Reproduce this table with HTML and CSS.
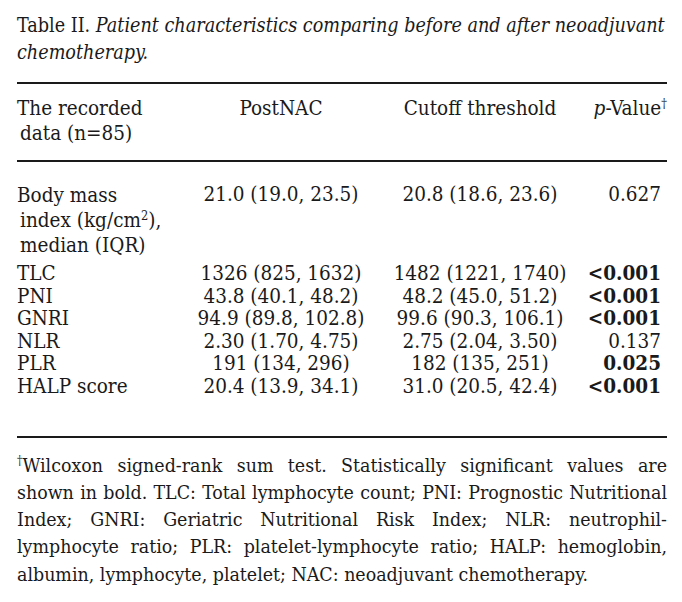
FILE: index.html
```html
<!DOCTYPE html>
<html lang="en">
<head>
<meta charset="utf-8">
<title>Table II</title>
<link rel="stylesheet" href="styles.css">
</head>
<body>
<div class="page">
  <p class="caption">Table II. <em>Patient characteristics comparing before and after neoadjuvant chemotherapy.</em></p>
  <table class="data">
    <thead>
      <tr>
        <th class="c1"><span class="hang">The recorded<br>data (n=85)</span></th>
        <th class="c2">PostNAC</th>
        <th class="c3">Cutoff threshold</th>
        <th class="c4"><em>p</em>-Value<sup>†</sup></th>
      </tr>
    </thead>
    <tbody>
      <tr class="first">
        <td class="c1"><span class="hang multi">Body mass<br>index (kg/cm<sup>2</sup>),<br>median (IQR)</span></td>
        <td class="c2">21.0 (19.0, 23.5)</td>
        <td class="c3">20.8 (18.6, 23.6)</td>
        <td class="c4">0.627</td>
      </tr>
      <tr>
        <td class="c1">TLC</td>
        <td class="c2">1326 (825, 1632)</td>
        <td class="c3">1482 (1221, 1740)</td>
        <td class="c4"><strong>&lt;0.001</strong></td>
      </tr>
      <tr>
        <td class="c1">PNI</td>
        <td class="c2">43.8 (40.1, 48.2)</td>
        <td class="c3">48.2 (45.0, 51.2)</td>
        <td class="c4"><strong>&lt;0.001</strong></td>
      </tr>
      <tr>
        <td class="c1">GNRI</td>
        <td class="c2">94.9 (89.8, 102.8)</td>
        <td class="c3">99.6 (90.3, 106.1)</td>
        <td class="c4"><strong>&lt;0.001</strong></td>
      </tr>
      <tr>
        <td class="c1">NLR</td>
        <td class="c2">2.30 (1.70, 4.75)</td>
        <td class="c3">2.75 (2.04, 3.50)</td>
        <td class="c4">0.137</td>
      </tr>
      <tr>
        <td class="c1">PLR</td>
        <td class="c2">191 (134, 296)</td>
        <td class="c3">182 (135, 251)</td>
        <td class="c4"><strong>0.025</strong></td>
      </tr>
      <tr class="last">
        <td class="c1">HALP score</td>
        <td class="c2">20.4 (13.9, 34.1)</td>
        <td class="c3">31.0 (20.5, 42.4)</td>
        <td class="c4"><strong>&lt;0.001</strong></td>
      </tr>
    </tbody>
  </table>
  <p class="note">
    <span class="line"><span class="lead"><sup>†</sup>Wilcoxon</span> signed-rank sum test. Statistically significant values are</span>
    <span class="line">shown in bold. TLC: Total lymphocyte count; PNI: Prognostic Nutritional</span>
    <span class="line">Index; GNRI: Geriatric Nutritional Risk Index; NLR: neutrophil-</span>
    <span class="line">lymphocyte ratio; PLR: platelet-lymphocyte ratio; HALP: hemoglobin,</span>
    <span class="line end">albumin, lymphocyte, platelet; NAC: neoadjuvant chemotherapy.</span>
  </p>
</div>
</body>
</html>
```

FILE: styles.css
```css
html, body {
  margin: 0;
  padding: 0;
  background: #ffffff;
}

.page {
  width: 650px;
  padding: 12px 15px 0 17px;
  font-family: "DejaVu Serif Condensed", "DejaVu Serif", serif;
  color: #1a1a1a;
}

.caption {
  margin: 0;
  font-size: 19.6px;
  line-height: 27px;
}

.data {
  width: 650px;
  margin-top: 16px;
  font-size: 20.5px;
  border-collapse: collapse;
  table-layout: fixed;
  border-top: 2px solid #1a1a1a;
  border-bottom: 2px solid #1a1a1a;
}

.data th,
.data td {
  padding: 0;
  font-weight: normal;
  vertical-align: top;
  white-space: nowrap;
}

.data thead th {
  line-height: 25px;
  padding-top: 12px;
  padding-bottom: 14px;
  border-bottom: 2px solid #1a1a1a;
}

.data td {
  line-height: 22.6px;
}

.data tr.first td {
  padding-top: 21px;
  padding-bottom: 4px;
}

.data tr.last td {
  padding-bottom: 38px;
}

.c1 { width: 170px; text-align: left; }
.c2 { width: 188px; text-align: center; }
.c3 { width: 210px; text-align: center; }
.c4 { width: 82px; text-align: right; }
.data tbody .c4 { padding-right: 6px; }

.hang {
  display: block;
  padding-left: 3px;
  text-indent: -3px;
}

.multi {
  line-height: 25px;
}

sup {
  font-size: 0.62em;
  line-height: 0;
  vertical-align: 0.55em;
}

strong {
  font-weight: bold;
}

.note {
  margin: 14px 0 0;
  font-size: 19.4px;
  line-height: 27.3px;
}

.line {
  display: block;
  white-space: nowrap;
  text-align: justify;
  text-align-last: justify;
  text-justify: inter-word;
}

.line.end {
  text-align-last: left;
}

.lead {
  display: inline-block;
}
```
